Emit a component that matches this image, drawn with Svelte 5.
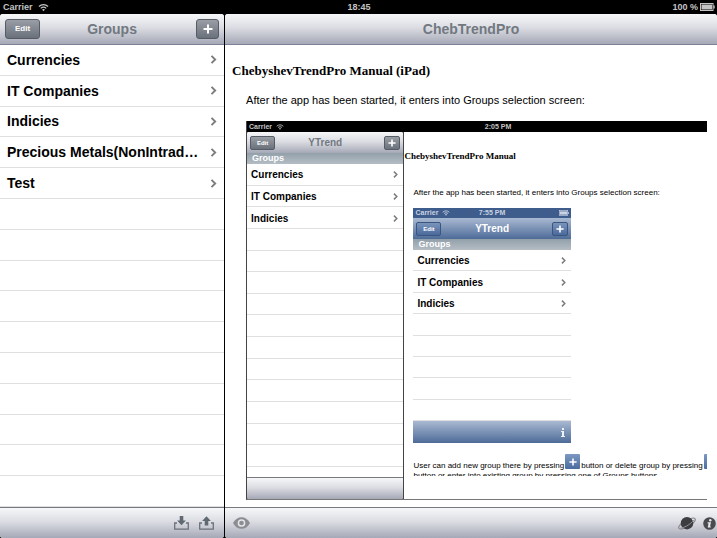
<script>
  const groups = ['Currencies', 'IT Companies', 'Indicies', 'Precious Metals(NonIntrad…', 'Test'];
  const sample = ['Currencies', 'IT Companies', 'Indicies'];
  const blanks = (n) => Array.from({ length: n });
</script>

{#snippet wifi()}
  <svg class="wifi" viewBox="0 0 12 9" aria-hidden="true">
    <path d="M1 3.4C3.8.6 8.2.6 11 3.4M3 5.4c1.7-1.7 4.3-1.7 6 0" fill="none" stroke="currentColor" stroke-width="1.3" />
    <path d="M4.4 6.8c1-.8 2.2-.8 3.2 0L6 8.6z" fill="currentColor" />
  </svg>
{/snippet}

{#snippet battery()}
  <svg class="battery" viewBox="0 0 15 8" aria-hidden="true">
    <rect x=".5" y=".5" width="12.5" height="7" fill="none" stroke="currentColor" />
    <rect x="1.5" y="1.5" width="10.5" height="5" fill="currentColor" />
    <path d="M14 2.5v3" stroke="currentColor" stroke-width="1.4" />
  </svg>
{/snippet}

{#snippet plus()}
  <svg class="plus" viewBox="0 0 10 10" aria-hidden="true">
    <path d="M5 .5v9M.5 5h9" stroke="#fff" stroke-width="2" />
  </svg>
{/snippet}

{#snippet rows(names, empty, half)}
  <ul class="rows">
    {#each names as name}
      <li>
        <a href="#group">
          <span>{name}</span>
          <svg class="chevron" viewBox="0 0 6 9" aria-hidden="true">
            <path d="M1 .8l3.7 3.7L1 8.2" fill="none" stroke="#7c7c7c" stroke-width="1.9" />
          </svg>
        </a>
      </li>
    {/each}
    {#each blanks(empty) as _}<li></li>{/each}
    {#if half}<li class="half"></li>{/if}
  </ul>
{/snippet}

<div class="screen">
  <div class="status">
    <span class="carrier">Carrier {@render wifi()}</span>
    <span>18:45</span>
    <span class="power">100 % {@render battery()}</span>
  </div>

  <div class="split">
    <nav class="side">
      <header class="bar top">
        <button class="btn">Edit</button>
        <h1>Groups</h1>
        <button class="btn add" aria-label="Add group">{@render plus()}</button>
      </header>
      {@render rows(groups, 10, false)}
      <footer class="bar bottom">
        <button class="icon" aria-label="Import">
          <svg width="15" height="14" viewBox="0 0 15 14">
            <path d="M3 7H.7v6.2h13.6V7H12" fill="none" stroke="#6a717a" stroke-width="1.3" />
            <path d="M5.7 0h3.6v4.4h2.6L7.5 9.2 3.1 4.4h2.6z" fill="#616972" />
          </svg>
        </button>
        <button class="icon" aria-label="Export">
          <svg width="15" height="14" viewBox="0 0 15 14">
            <path d="M3 7H.7v6.2h13.6V7H12" fill="none" stroke="#6a717a" stroke-width="1.3" />
            <path d="M5.7 9.4h3.6V5h2.6L7.5.2 3.1 5h2.6z" fill="#616972" />
          </svg>
        </button>
      </footer>
    </nav>

    <main class="detail">
      <header class="bar top single"><h1>ChebTrendPro</h1></header>
      <article class="manual">
        <h2>ChebyshevTrendPro Manual (iPad)</h2>
        <p>After the app has been started, it enters into Groups selection screen:</p>

        <figure class="tablet">
          <div class="status small wide">
            <span class="carrier">Carrier {@render wifi()}</span>
            <span>2:05 PM</span>
            <span></span>
          </div>
          <div class="split">
            <div class="side">
              <div class="bar top">
                <button class="btn">Edit</button>
                <h3>YTrend</h3>
                <button class="btn add" aria-label="Add group">{@render plus()}</button>
              </div>
              <div class="section">Groups</div>
              {@render rows(sample, 11, true)}
              <div class="bar bottom"></div>
            </div>
            <div class="page">
              <h4>ChebyshevTrendPro Manual</h4>
              <p>After the app has been started, it enters into Groups selection screen:</p>
              <div class="phone">
                <div class="status small">
                  <span class="carrier">Carrier {@render wifi()}</span>
                  <span>7:55 PM</span>
                  <span class="power">{@render battery()}</span>
                </div>
                <div class="bar top">
                  <button class="btn">Edit</button>
                  <h3>YTrend</h3>
                  <button class="btn add" aria-label="Add group">{@render plus()}</button>
                </div>
                <div class="section">Groups</div>
                {@render rows(sample, 5, false)}
                <div class="bar bottom">
                  <svg width="4" height="9" viewBox="0 0 4 9" aria-hidden="true">
                    <path d="M1 0h2v2H1zM0 3h3v5h1v1H0V8h1V4H0z" fill="#eef2f7" />
                  </svg>
                </div>
              </div>
              <div class="note">
                <div class="line">
                  <span>User can add new group there by pressing</span>
                  <span class="chip">{@render plus()}</span>
                  <span>button or delete group by pressing</span>
                  <span class="chip"></span>
                </div>
                <div>button or enter into existing group by pressing one of Groups buttons.</div>
              </div>
            </div>
          </div>
        </figure>
      </article>
      <footer class="bar bottom">
        <button class="icon" aria-label="View">
          <svg width="17" height="12" viewBox="0 0 17 12">
            <path d="M0 6C4-1.8 13-1.8 17 6 13 13.8 4 13.8 0 6z" fill="#8b8d93" />
            <circle cx="8.5" cy="6" r="3.1" fill="none" stroke="#e4e5ea" stroke-width="1.5" />
          </svg>
        </button>
        <span class="gap"></span>
        <button class="icon" aria-label="Network">
          <svg width="20" height="15" viewBox="0 0 20 15">
            <ellipse cx="10" cy="7.5" rx="9.4" ry="3" transform="rotate(-30 10 7.5)" fill="none" stroke="#85878c" stroke-width="1" />
            <circle cx="10" cy="7.2" r="6.2" fill="#3c3d40" />
            <path d="M2.4 12.2c3.6.4 11.4-3.8 14.6-8.4" fill="none" stroke="#909298" stroke-width="1" />
          </svg>
        </button>
        <button class="icon" aria-label="Information">
          <svg width="13" height="13" viewBox="0 0 13 13">
            <circle cx="6.5" cy="6.5" r="6.3" fill="#4a4b4f" />
            <circle cx="7.3" cy="3.2" r="1.2" fill="#e8e9ed" />
            <path d="M4.6 5.2h3.4L7 9.4h1l-.4 1.2H4.7l.9-4.2h-1z" fill="#e8e9ed" />
          </svg>
        </button>
      </footer>
    </main>
  </div>
</div>

<style>
  :global(body) {
    margin: 0;
    background: #000;
  }
  .screen {
    display: flex;
    flex-direction: column;
    height: 100vh;
    overflow: hidden;
    background: #000;
    font-family: "Liberation Sans", Arial, sans-serif;
    color: #000;
  }
  h1, h2, h3, h4, p, ul, figure {
    margin: 0;
    padding: 0;
  }
  .status {
    flex: none;
    display: grid;
    grid-template-columns: 1fr auto 1fr;
    align-items: center;
    height: 14px;
    padding: 0 2px 0 3px;
    font-size: 9px;
    font-weight: bold;
    line-height: 14px;
    color: #c4c4c4;
    background: #000;
  }
  .carrier, .power {
    display: flex;
    align-items: center;
    gap: 5px;
  }
  .power {
    justify-content: flex-end;
    gap: 2px;
  }
  .wifi {
    width: 11px;
    height: 9px;
  }
  .battery {
    width: 15px;
    height: 8px;
  }
  .split {
    flex: 1;
    min-height: 0;
    display: flex;
    gap: 1px;
  }
  .side {
    flex: none;
    width: 31.25%;
    display: flex;
    flex-direction: column;
    background: #fff;
    border-radius: 3px;
    overflow: hidden;
  }
  .detail {
    flex: 1;
    min-width: 0;
    display: flex;
    flex-direction: column;
    background: #fff;
    border-radius: 3px;
    overflow: hidden;
  }
  .bar {
    flex: none;
    box-sizing: border-box;
    height: 31px;
    display: flex;
    align-items: center;
    background: linear-gradient(#f6f7f8, #dcdde3 45%, #a5a8b6);
  }
  .top {
    display: grid;
    grid-template-columns: 1fr auto 1fr;
    padding: 0 5px;
    border-bottom: 1px solid #7e8197;
  }
  .single {
    grid-template-columns: 1fr;
  }
  .bottom {
    border-top: 1px solid #77797f;
  }
  h1 {
    text-align: center;
    font-size: 14px;
    line-height: 20px;
    color: #717880;
  }
  .btn {
    box-sizing: border-box;
    width: 35px;
    height: 20px;
    padding: 0;
    display: flex;
    align-items: center;
    justify-content: center;
    font: bold 8px/10px "Liberation Sans", Arial, sans-serif;
    color: #fff;
    background: linear-gradient(#9a9ea5, #6a717b);
    border: 1px solid #565c66;
    border-radius: 3px;
  }
  .add {
    width: 23px;
    justify-self: end;
  }
  .plus {
    width: 10px;
    height: 10px;
  }
  .rows {
    flex: 1;
    min-height: 0;
    display: flex;
    flex-direction: column;
    list-style: none;
    background: #fff;
    font-size: 14px;
    font-weight: bold;
  }
  .rows li {
    flex: 2 1 0;
    min-height: 0;
    box-sizing: border-box;
    border-bottom: 1px solid #e0e0e0;
  }
  .rows .half {
    flex-grow: 1;
    border: 0;
  }
  .rows a {
    height: 100%;
    display: flex;
    align-items: center;
    justify-content: space-between;
    padding: 0 7px;
    color: #000;
    white-space: nowrap;
    text-decoration: none;
  }
  .chevron {
    width: 7px;
    height: 9px;
  }
  .side > .bottom {
    justify-content: flex-end;
    gap: 10px;
    padding-right: 10px;
  }
  .icon {
    display: flex;
    padding: 0;
    border: 0;
    background: none;
  }
  .detail > .bottom {
    gap: 6px;
    padding: 0 1px 0 8px;
  }
  .gap {
    flex: 1;
  }
  .manual {
    flex: 1;
    min-height: 0;
    display: flex;
    flex-direction: column;
    padding: 18px 10px 7px 7px;
  }
  h2 {
    font: bold 13px/16px "Liberation Serif", "Times New Roman", serif;
  }
  .manual > p {
    padding: 14px 0 14px 14px;
    font-size: 11px;
    line-height: 14px;
  }

  .tablet {
    flex: 1;
    min-height: 0;
    margin-left: 14px;
    display: flex;
    flex-direction: column;
    background: #444;
    border-left: 1px solid #444;
    border-bottom: 1px solid #777;
    overflow: hidden;
  }
  .small {
    height: 11px;
    padding: 0 2px;
    font-size: 7px;
    line-height: 11px;
  }
  .small .carrier {
    gap: 4px;
  }
  /* the tablet is wider than its frame, so its clock sits right of centre */
  .wide {
    margin-right: -42px;
  }
  .small .wifi {
    width: 8px;
    height: 6px;
  }
  .small .battery {
    width: 10px;
    height: 6px;
  }
  .tablet .side {
    width: 34%;
    border-radius: 2px;
  }
  .tablet .bar {
    height: 22px;
  }
  .tablet .top {
    height: 21px;
    padding: 0 3px;
    border-bottom: 0;
  }
  .tablet .btn {
    width: 25px;
    height: 14px;
    font-size: 6px;
    line-height: 8px;
    border-radius: 2px;
  }
  .tablet .add {
    width: 16px;
  }
  .tablet .plus {
    width: 8px;
    height: 8px;
  }
  h3 {
    font-size: 10px;
    line-height: 14px;
    color: #717880;
  }
  .section {
    flex: none;
    height: 11px;
    padding-left: 5px;
    font-size: 9px;
    font-weight: bold;
    line-height: 11px;
    color: #fff;
    background: linear-gradient(#92a0aa, #b5bdc4);
  }
  .tablet .rows {
    font-size: 10px;
  }
  .tablet .rows a {
    padding: 1px 5px 0 4px;
    box-sizing: border-box;
  }
  .tablet .chevron {
    width: 5px;
    height: 7px;
  }
  .page {
    flex: 1;
    min-width: 0;
    background: #fff;
    overflow: hidden;
  }
  h4 {
    padding-top: 18px;
    font: bold 9px/12px "Liberation Serif", "Times New Roman", serif;
  }
  .page p {
    padding: 26px 0 10px 9px;
    font-size: 8px;
    line-height: 10px;
    white-space: nowrap;
  }
  .phone {
    display: flex;
    flex-direction: column;
    width: 52%;
    height: 235px;
    margin-left: 9px;
  }
  .phone .status {
    height: 10px;
    line-height: 10px;
    color: #c9d3e2;
    background: #3e5c8c;
  }
  .phone .bar {
    background: linear-gradient(#a9b9d2, #4d6b98);
    border: 0;
  }
  .phone .bottom {
    justify-content: flex-end;
    padding-right: 6px;
  }
  .phone h3 {
    color: #fff;
  }
  .phone .btn {
    background: linear-gradient(#7a94ba, #4a6a9c);
    border-color: #3b557f;
  }
  .note {
    height: 22px;
    margin: 11px 0 0 9px;
    font-size: 8px;
    line-height: 10px;
    white-space: nowrap;
    overflow: hidden;
  }
  .line {
    display: flex;
    align-items: flex-end;
    gap: 1px;
    height: 17px;
  }
  .line span {
    flex: none;
  }
  .chip {
    display: flex;
    align-items: center;
    justify-content: center;
    align-self: flex-start;
    width: 15px;
    height: 15px;
    background: linear-gradient(#7d99c2, #4a6c9f);
    border-radius: 1px;
  }
</style>
